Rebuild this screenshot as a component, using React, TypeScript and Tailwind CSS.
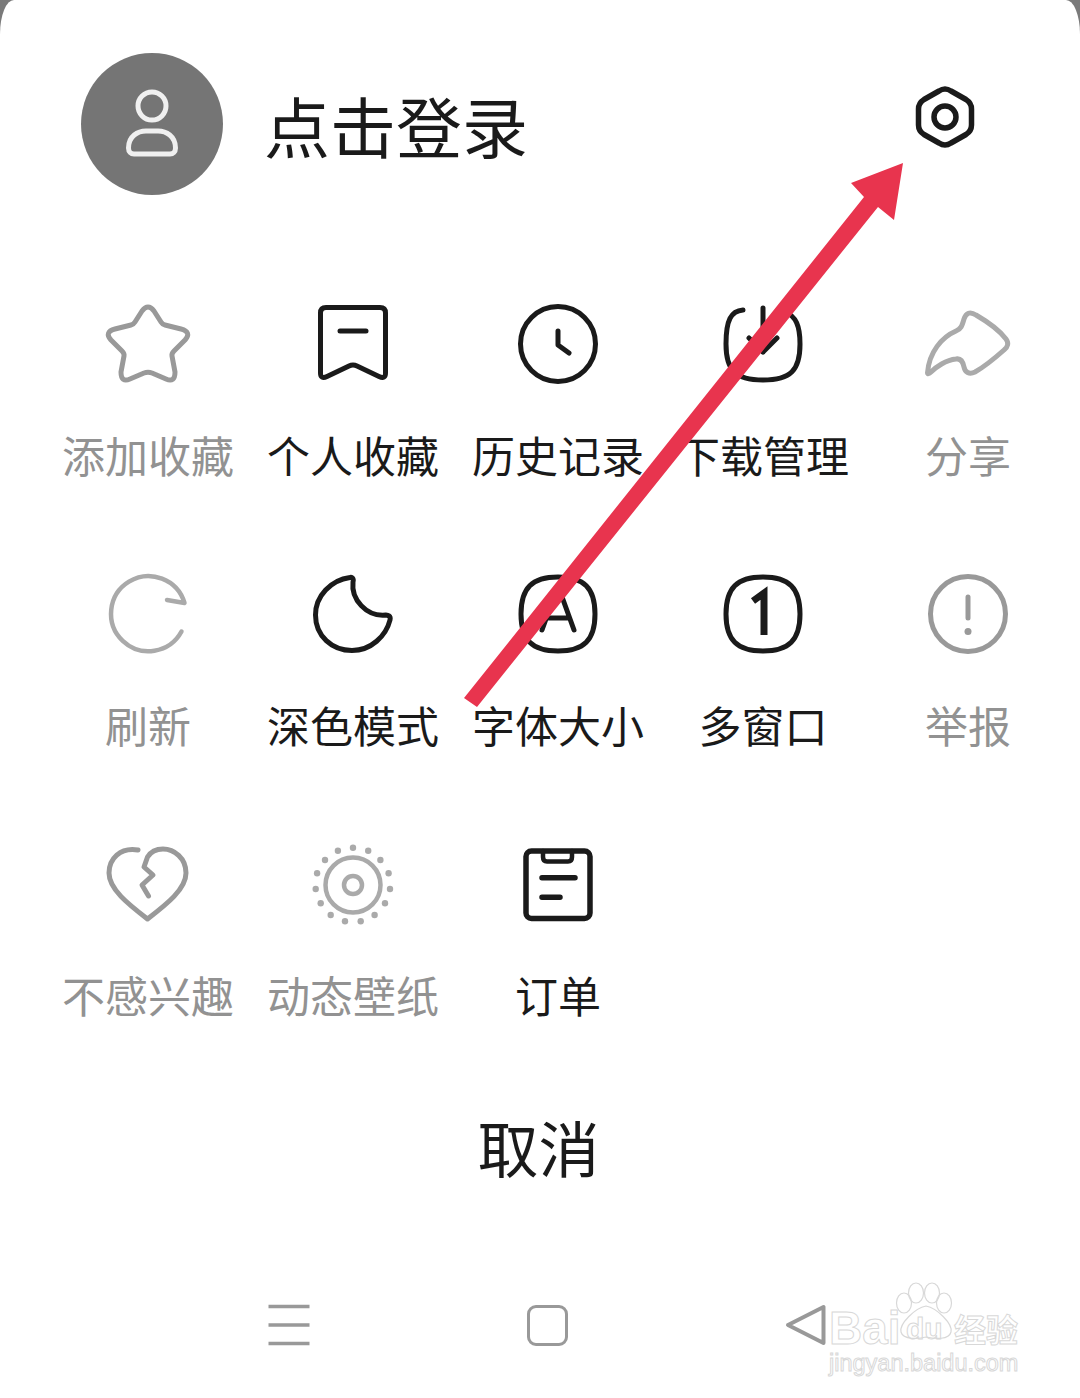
import React from "react";

const DARK = "#1a1a1a";
const GRAY = "#999999";
const LIGHT = "#aaaaaa";

function Ico({ c, children, sw = 5 }: { c: string; children: React.ReactNode; sw?: number }) {
  return (
    <svg width="80" height="80" viewBox="0 0 80 80" fill="none" stroke={c} strokeWidth={sw} strokeLinecap="round" strokeLinejoin="round" className="mx-auto block overflow-visible">
      {children}
    </svg>
  );
}

const squircle = "M40 3 C66 3 77 14 77 40 C77 66 66 77 40 77 C14 77 3 66 3 40 C3 14 14 3 40 3Z";

const dots: [number, number][] = [
  [40, 3.7], [55.2, 6.7], [67.4, 16], [75.6, 29.3], [77, 45], [72, 59.3], [61.6, 71], [47.7, 77.3],
  [32, 77.3], [17.7, 71], [7.7, 59.3], [2.7, 45], [4.1, 29.3], [12, 16], [24.9, 6.7],
];

const items: { label: string; muted?: boolean; icon: React.ReactNode }[] = [
  {
    label: "添加收藏",
    muted: true,
    icon: (
      <Ico c={GRAY}>
        <path d="M34 7 Q40 -1 46 7 L53 18 Q54.5 20.5 57 21 L73 25 Q84 28 77 36 L66 47 Q63.5 49.5 64 52 L67 68 Q67 79 58 75 L44 69 Q40 67.5 36 69 L22 75 Q13 79 13 68 L16 52 Q16.5 49.5 14 47 L3 36 Q-4 28 7 25 L23 21 Q25.5 20.5 27 18Z" />
      </Ico>
    ),
  },
  {
    label: "个人收藏",
    icon: (
      <Ico c={DARK}>
        <path d="M13 3.5 H67 Q72.5 3.5 72.5 9 V69 Q72.5 75.5 66 72.5 L44 62 Q40 60 36 62 L14 72.5 Q7.5 75.5 7.5 69 V9 Q7.5 3.5 13 3.5Z" />
        <path d="M27 27 H53" />
      </Ico>
    ),
  },
  {
    label: "历史记录",
    icon: (
      <Ico c={DARK}>
        <circle cx="40" cy="40" r="37.5" />
        <path d="M40 27 V41 L51 49" />
      </Ico>
    ),
  },
  {
    label: "下载管理",
    icon: (
      <Ico c={DARK}>
        <path d="M20 6 C8 7 3 16 3 40 C3 66 12 76 40 76 C68 76 77 66 77 40 C77 22 73 12 62 8" />
        <path d="M40 4 V48 M26 34 L40 48 L54 34" />
      </Ico>
    ),
  },
  {
    label: "分享",
    muted: true,
    icon: (
      <Ico c={LIGHT}>
        <path d="M-0.5 69 C1 48 14 33 28 27 C33 25 34 22 36 15 C38 9 42 7 48 11 C60 18 72 27 78 35 C81 39 80 43 76 46 C67 54 56 63 47 68 C41 71 37 68 36 63 C35 58 33 54 28 55 C18 56 8 63 3 68 C1 70 -0.5 70 -0.5 69Z" />
      </Ico>
    ),
  },
  {
    label: "刷新",
    muted: true,
    icon: (
      <Ico c={LIGHT} sw={4.5}>
        <path d="M73.5 57.5 A37.5 37.5 0 1 1 76.5 29 L59 26" />
      </Ico>
    ),
  },
  {
    label: "深色模式",
    icon: (
      <Ico c={DARK}>
        <path d="M37 3.5 C18 6 2.5 22 2.5 41 C2.5 62 19 76.5 39 76.5 C58 76.5 73 62 77 46 C78 42 75 41 73 41 C53 43 38 25 40 8 C41 4 39 3 37 3.5Z" />
      </Ico>
    ),
  },
  {
    label: "字体大小",
    icon: (
      <Ico c={DARK}>
        <path d={squircle} />
        <path d="M24 56 L37 20 Q40 14 43 20 L56 56 M29 44 H51" />
      </Ico>
    ),
  },
  {
    label: "多窗口",
    icon: (
      <Ico c={DARK}>
        <path d={squircle} />
        <path d="M30 27 L41 19 V61" strokeWidth={7} strokeLinecap="butt" strokeLinejoin="miter" />
      </Ico>
    ),
  },
  {
    label: "举报",
    muted: true,
    icon: (
      <Ico c={GRAY}>
        <circle cx="40" cy="40" r="37.5" />
        <path d="M40 23 V44" />
        <circle cx="40" cy="57.5" r="3.5" fill={GRAY} stroke="none" />
      </Ico>
    ),
  },
  {
    label: "不感兴趣",
    muted: true,
    icon: (
      <Ico c={GRAY}>
        <path d="M30 6 C12 3 1 15 1 29 C1 45 20 60 39.5 75 C59 60 78 45 78 29 C78 14 66 5 55 5 C47 5 42 9 39.5 13 L36 23 L45 31 L34 41 L40.5 52" />
      </Ico>
    ),
  },
  {
    label: "动态壁纸",
    muted: true,
    icon: (
      <Ico c={LIGHT} sw={4.5}>
        <circle cx="40" cy="41" r="27.5" />
        <circle cx="40" cy="41" r="9" />
        {dots.map(([x, y], i) => (
          <circle key={i} cx={x} cy={y} r="3.2" fill={LIGHT} stroke="none" />
        ))}
      </Ico>
    ),
  },
  {
    label: "订单",
    icon: (
      <Ico c={DARK} sw={5.5}>
        <rect x="8" y="7" width="64" height="67.5" rx="5.5" />
        <path d="M25 7 V13 Q25 17.5 29 17.5 H50 Q54 17.5 54 13 V7" strokeWidth={4.5} />
        <path d="M24 33.7 H57 M24 53.3 H42" />
      </Ico>
    ),
  },
];

export default function App() {
  return (
    <div className="relative w-[1080px] h-[1398px] overflow-hidden bg-[#7a7a7a] font-['Noto_Sans_CJK_SC','Noto_Sans',sans-serif]">
      <div className="h-full bg-white rounded-tl-[14px_34px] rounded-tr-[14px_34px] flex flex-col">
        <header className="flex items-start pl-[81px] pt-[53px] pr-[105px]">
          <div className="w-[142px] h-[142px] rounded-full bg-[#757575] shrink-0">
            <svg width="142" height="142" viewBox="0 0 142 142" fill="none" stroke="#f0f0f0" strokeWidth="5">
              <circle cx="71" cy="53" r="14" />
              <path d="M47.5 95 C47.5 83 57 78 65 78 H77 C85 78 94.5 83 94.5 95 C94.5 99 92 101 89 101 H53 C50 101 47.5 99 47.5 95Z" />
            </svg>
          </div>
          <div className="ml-[41px] h-[142px] flex items-center text-[66px] leading-[76px] text-[#1a1a1a]">点击登录</div>
          <svg width="60" height="64" viewBox="0 0 60 64" fill="none" stroke="#1a1a1a" strokeWidth="5.5" strokeLinejoin="round" className="ml-auto mt-[32px]">
            <path d="M24 6 Q30 2 36 6 L51 14.5 Q56.5 18 56.5 24 V40 Q56.5 46 51 49.5 L36 58 Q30 62 24 58 L9 49.5 Q3.5 46 3.5 40 V24 Q3.5 18 9 14.5Z" />
            <circle cx="30" cy="32" r="11" />
          </svg>
        </header>

        <div className="grid grid-cols-[repeat(5,205px)] gap-y-[99px] ml-[45.5px] mt-[109px]">
          {items.map((it) => (
            <div key={it.label} className="flex flex-col items-center">
              {it.icon}
              <div className={`mt-[49px] text-[43px] leading-[42px] whitespace-nowrap ${it.muted ? "text-[#929292]" : "text-[#1a1a1a]"}`}>
                {it.label}
              </div>
            </div>
          ))}
        </div>

        <div className="mt-[102px] pr-[3px] text-center text-[61px] leading-[60px] text-[#1a1a1a]">取消</div>

        <nav className="flex items-center mt-[127px] pl-[268px]">
          <svg width="42" height="42" viewBox="0 0 42 42" fill="none" stroke="#999999" strokeWidth="3.5">
            <path d="M0.5 2.5 H41.5 M0.5 21 H41.5 M0.5 39.5 H41.5" />
          </svg>
          <div className="ml-[217px] w-[41px] h-[41px] rounded-[9px] border-[3.5px] border-[#999999]" />
          <svg width="42" height="42" viewBox="0 0 42 42" fill="none" stroke="#999999" strokeWidth="4" strokeLinejoin="round" className="ml-[217px]">
            <path d="M3 21 L38.5 3 V39 Z" />
          </svg>
        </nav>
      </div>

      {/* annotation arrow drawn over the screenshot */}
      <svg className="absolute inset-0 pointer-events-none" width="1080" height="1398" viewBox="0 0 1080 1398">
        <path fill="#e8344e" d="M464 698 L477 707 L878 207 L894 220 L903 163 L851 183 L864 197 Z" />
      </svg>

      {/* watermark */}
      <div className="absolute left-[829px] top-[1282px] w-[195px] h-[96px] pointer-events-none font-['Liberation_Sans',sans-serif] text-transparent [-webkit-text-stroke:1px_#d8d8d8]">
        <svg className="absolute left-[62px] top-0" width="70" height="62" viewBox="0 0 70 62" fill="none" stroke="#d8d8d8" strokeWidth="1.2">
          <ellipse cx="13" cy="21" rx="7.5" ry="10" />
          <ellipse cx="25" cy="11" rx="7.5" ry="10" />
          <ellipse cx="41" cy="11" rx="7.5" ry="10" />
          <ellipse cx="53" cy="21" rx="7.5" ry="10" />
          <path d="M35 24 C46 26 62 42 60 50 C58 58 44 57 35 55 C28 57 12 58 10 50 C8 42 24 26 35 24Z" />
        </svg>
        <div className="absolute left-0 top-[24px] text-[46px] leading-[44px] font-bold">Bai</div>
        <div className="absolute left-[77px] top-[32px] text-[30px] leading-[30px] font-bold">du</div>
        <div className="absolute left-[125px] top-[28px] text-[32px] leading-[36px] font-bold font-['Noto_Sans_CJK_SC',sans-serif]">经验</div>
        <div className="absolute left-0 top-[68px] text-[23.5px] leading-[26px]">jingyan.baidu.com</div>
      </div>
    </div>
  );
}
